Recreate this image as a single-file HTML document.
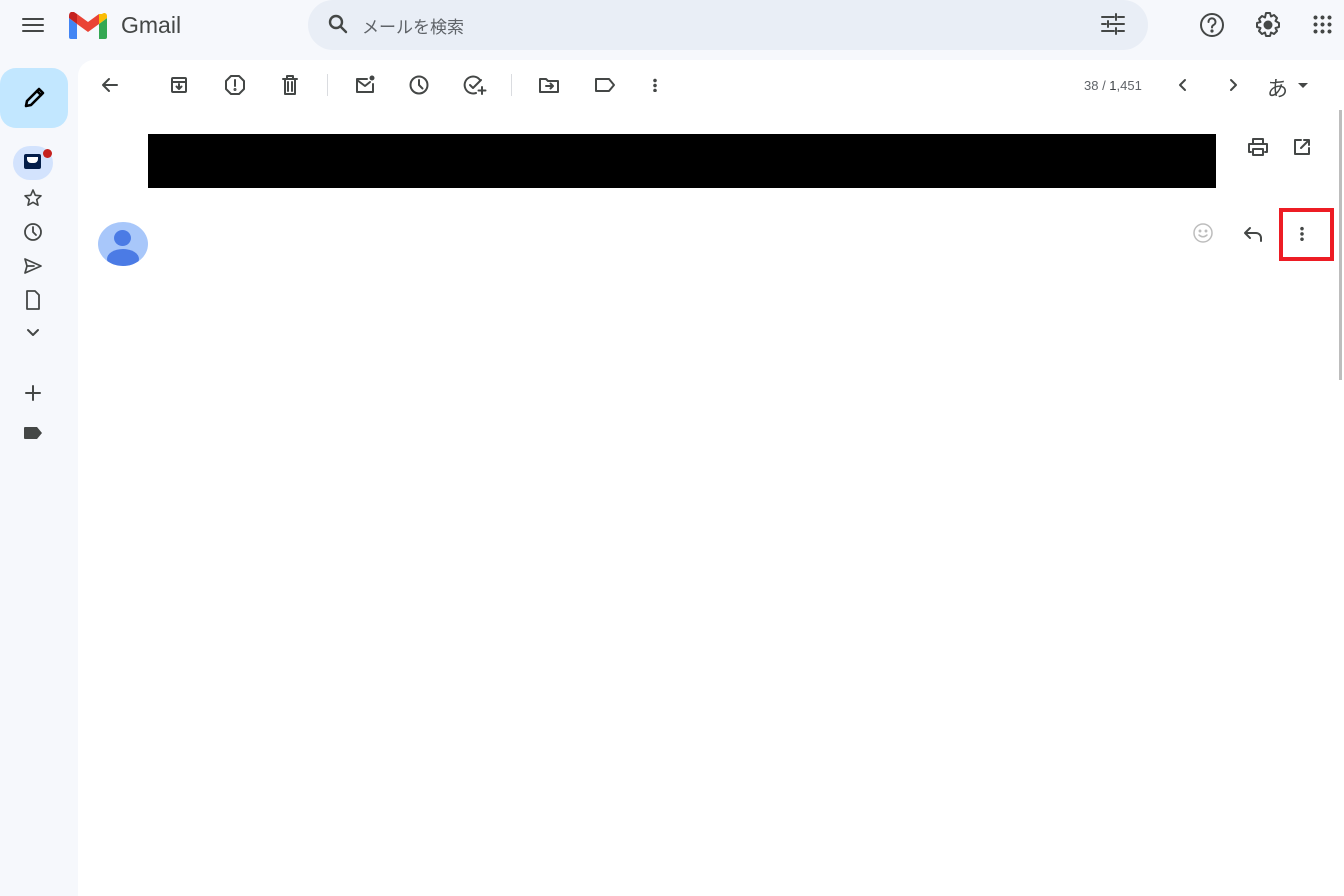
<!DOCTYPE html>
<html><head><meta charset="utf-8"><style>
*{margin:0;padding:0;box-sizing:border-box}
body{width:1344px;height:896px;background:#f6f8fc;font-family:"Liberation Sans","Noto Sans CJK JP",sans-serif;position:relative;overflow:hidden;color:#444746}
.a{position:absolute}
svg{position:absolute;fill:none;stroke:#444746;stroke-width:2;stroke-linecap:round;stroke-linejoin:round}
</style></head><body>
<svg style="left:21px;top:15px" width="24" height="20" viewBox="0 0 24 20"><path d="M2 4h20M2 10h20M2 16h20"/></svg>
<svg style="left:68px;top:12px;stroke:none" width="40" height="28" viewBox="0 0 40 28">
<path d="M3 27h6V12L1 6v19a2 2 0 0 0 2 2z" fill="#4285f4"/>
<path d="M31 27h6a2 2 0 0 0 2-2V6l-8 6z" fill="#34a853"/>
<path d="M31 2v10l8-6V4c0-3-3-4-5-2z" fill="#fbbc04"/>
<path d="M9 12V2l11 8 11-8v10l-11 8z" fill="#ea4335"/>
<path d="M1 4v2l8 6V2L6 0C4-1 1 0 1 4z" fill="#c5221f"/></svg>
<div class="a" style="left:121px;top:12px;font-size:23px;color:#444746">Gmail</div>
<div class="a" style="left:308px;top:0;width:840px;height:50px;border-radius:25px;background:#e9eef6"></div>
<svg style="left:326px;top:12px;stroke-width:2.4" width="24" height="24" viewBox="0 0 24 24"><circle cx="10" cy="10" r="6"/><path d="M15 15l5 5"/></svg>
<div class="a" style="left:362px;top:13px;font-size:17px;color:#5f6368">メールを検索</div>
<svg style="left:1100px;top:12px" width="26" height="24" viewBox="0 0 26 24"><path d="M2 5h12M18 5h6M16 2v6M2 12h4M10 12h14M8 9v6M2 19h12M18 19h6M16 16v6"/></svg>
<svg style="left:1199px;top:12px" width="26" height="26" viewBox="0 0 26 26"><circle cx="13" cy="13" r="11"/><path d="M9.5 10a3.5 3.5 0 1 1 5 3c-1.2.6-1.5 1.3-1.5 2.5"/><circle cx="13" cy="19" r=".6" fill="#444746"/></svg>
<svg style="left:1254px;top:11px" width="28" height="28" viewBox="0 0 28 28"><path d="M12 2h4l1 3.5 3-1.5 3 3-1.5 3L25 12v4l-3.5 1 1.5 3-3 3-3-1.5L16 25h-4l-1-3.5-3 1.5-3-3 1.5-3L3 16v-4l3.5-1L5 8l3-3 3 1.5z"/><circle cx="14" cy="14" r="3.5" fill="#444746"/></svg>
<div class="a" style="left:1312px;top:14px;width:20px;height:20px;background:radial-gradient(circle,#444746 1.8px,transparent 2.2px) 0 0/7px 7px"></div>
<div class="a" style="left:0;top:68px;width:68px;height:60px;border-radius:16px;background:#c2e7ff"></div>
<svg style="left:22px;top:86px;stroke:#000;stroke-width:2.6" width="24" height="24" viewBox="0 0 24 24"><path d="M4 20l1-5L15 5l4 4L9 19z"/><path d="M15 5l2-2 4 4-2 2"/></svg>
<div class="a" style="left:13px;top:146px;width:40px;height:34px;border-radius:17px;background:#d3e3fd"></div>
<div class="a" style="left:24px;top:154px;width:17px;height:15px;background:#041e49;border-radius:2px"></div>
<div class="a" style="left:27px;top:157px;width:11px;height:6px;background:#fff;border-radius:0 0 4px 4px"></div>
<div class="a" style="left:43px;top:149px;width:9px;height:9px;border-radius:50%;background:#c5221f"></div>
<svg style="left:23px;top:188px;stroke-width:1.6" width="20" height="20" viewBox="0 0 20 20"><path d="M10 2l2.3 5.3 5.7.5-4.3 3.8 1.3 5.6L10 14.3 5 17.2l1.3-5.6L2 7.8l5.7-.5z"/></svg>
<svg style="left:22px;top:221px;stroke-width:1.8" width="22" height="22" viewBox="0 0 22 22"><circle cx="11" cy="11" r="8"/><path d="M11 6v5l3 3"/></svg>
<svg style="left:23px;top:257px;stroke-width:1.7" width="20" height="18" viewBox="0 0 20 18"><path d="M2 2l16 7-16 7 2-7zM4 9h7"/></svg>
<svg style="left:24px;top:290px;stroke-width:1.8" width="18" height="20" viewBox="0 0 18 20"><path d="M3 1h8l4 4v14H3z"/></svg>
<svg style="left:25px;top:327px" width="16" height="12" viewBox="0 0 16 12"><path d="M3 3l5 5 5-5"/></svg>
<svg style="left:23px;top:383px" width="20" height="20" viewBox="0 0 20 20"><path d="M10 3v14M3 10h14"/></svg>
<svg style="left:23px;top:426px;stroke:none" width="20" height="14" viewBox="0 0 20 14"><path d="M2 1h12l5 6-5 6H2a1 1 0 0 1-1-1V2a1 1 0 0 1 1-1z" fill="#444746"/></svg>
<div class="a" style="left:78px;top:60px;width:1266px;height:836px;background:#fff;border-radius:16px 0 0 0"></div>
<div class="a" style="left:1339px;top:110px;width:3px;height:270px;background:#bdbdbd"></div>
<svg style="left:100px;top:75px" width="20" height="20" viewBox="0 0 20 20"><path d="M17 10H3M9 4l-6 6 6 6"/></svg>
<svg style="left:169px;top:75px" width="20" height="20" viewBox="0 0 20 20"><rect x="3" y="3" width="14" height="14" rx="1"/><path d="M3 7h14M10 9v5M7.5 11.5L10 14l2.5-2.5"/></svg>
<svg style="left:224px;top:74px" width="22" height="22" viewBox="0 0 22 22"><path d="M7 2h8l5 5v8l-5 5H7l-5-5V7z"/><path d="M11 6v6"/><circle cx="11" cy="15.5" r=".5" fill="#444746"/></svg>
<svg style="left:280px;top:74px" width="20" height="22" viewBox="0 0 20 22"><path d="M3 5h14M7 5V2h6v3M5 5v15h10V5M8 8v9M12 8v9"/></svg>
<div class="a" style="left:327px;top:74px;width:1px;height:22px;background:#dadce0"></div>
<svg style="left:354px;top:74px" width="22" height="22" viewBox="0 0 22 22"><path d="M13 5H3v13h16V10M3 6l8 6 5-4"/><circle cx="18" cy="4" r="2.5" fill="#444746" stroke="none"/></svg>
<svg style="left:408px;top:74px" width="22" height="22" viewBox="0 0 22 22"><circle cx="11" cy="11" r="8.5"/><path d="M11 6v5l3.5 3.5"/></svg>
<svg style="left:463px;top:74px" width="24" height="22" viewBox="0 0 24 22"><path d="M17 6A8.5 8.5 0 1 0 13 19"/><path d="M7 11l3 3 8-8M19 13v7M15.5 16.5h7"/></svg>
<div class="a" style="left:511px;top:74px;width:1px;height:22px;background:#dadce0"></div>
<svg style="left:538px;top:75px" width="22" height="20" viewBox="0 0 22 20"><path d="M2 4h6l2 2h10v11H2z"/><path d="M8 11h7M12.5 8.5L15 11l-2.5 2.5"/></svg>
<svg style="left:593px;top:75px" width="24" height="20" viewBox="0 0 24 20"><path d="M3 4h13l5 6-5 6H3z"/></svg>
<div class="a" style="left:653px;top:78px;width:4px;height:14px;background:radial-gradient(circle,#444746 1.6px,transparent 2px) 0 0/4px 5px"></div>
<div class="a" style="left:1084px;top:78px;font-size:13px;color:#5f6368">38 / <span style="color:#3c4043">1</span>,451</div>
<svg style="left:1175px;top:77px" width="16" height="16" viewBox="0 0 16 16"><path d="M10 3L5 8l5 5"/></svg>
<svg style="left:1225px;top:77px" width="16" height="16" viewBox="0 0 16 16"><path d="M6 3l5 5-5 5"/></svg>
<div class="a" style="left:1267px;top:73px;font-size:21px;color:#444746">あ</div>
<div class="a" style="left:1298px;top:83px;border-left:5px solid transparent;border-right:5px solid transparent;border-top:5px solid #444746"></div>
<div class="a" style="left:148px;top:134px;width:1068px;height:54px;background:#000"></div>
<svg style="left:1246px;top:136px" width="24" height="22" viewBox="0 0 24 22"><path d="M7 7V3h10v4M5 16H3V8h18v8h-2M7 13h10v6H7z"/></svg>
<svg style="left:1292px;top:137px" width="20" height="20" viewBox="0 0 20 20"><path d="M9 3H3v14h14v-6M12 3h5v5M17 3l-8 8"/></svg>
<div class="a" style="left:98px;top:222px;width:50px;height:44px;border-radius:50%;background:#a8c7fa;overflow:hidden">
<div class="a" style="left:16px;top:8px;width:17px;height:16px;border-radius:50%;background:#4b7be5"></div>
<div class="a" style="left:9px;top:27px;width:32px;height:20px;border-radius:50%;background:#4b7be5"></div></div>
<svg style="left:1192px;top:222px;stroke:#bdbdbd;stroke-width:1.5" width="22" height="22" viewBox="0 0 22 22"><circle cx="11" cy="11" r="9"/><circle cx="8" cy="9" r=".7" fill="#bdbdbd"/><circle cx="14" cy="9" r=".7" fill="#bdbdbd"/><path d="M7 13q4 3.5 8 0"/></svg>
<svg style="left:1242px;top:224px" width="22" height="20" viewBox="0 0 22 20"><path d="M8 4L3 9l5 5M3 9h11a5 5 0 0 1 5 5v3"/></svg>
<div class="a" style="left:1300px;top:226px;width:4px;height:15px;background:radial-gradient(circle,#444746 1.6px,transparent 2px) 0 0/4px 5.3px"></div>
<div class="a" style="left:1279px;top:208px;width:55px;height:53px;border:4px solid #ed1c24"></div>
</body></html>
